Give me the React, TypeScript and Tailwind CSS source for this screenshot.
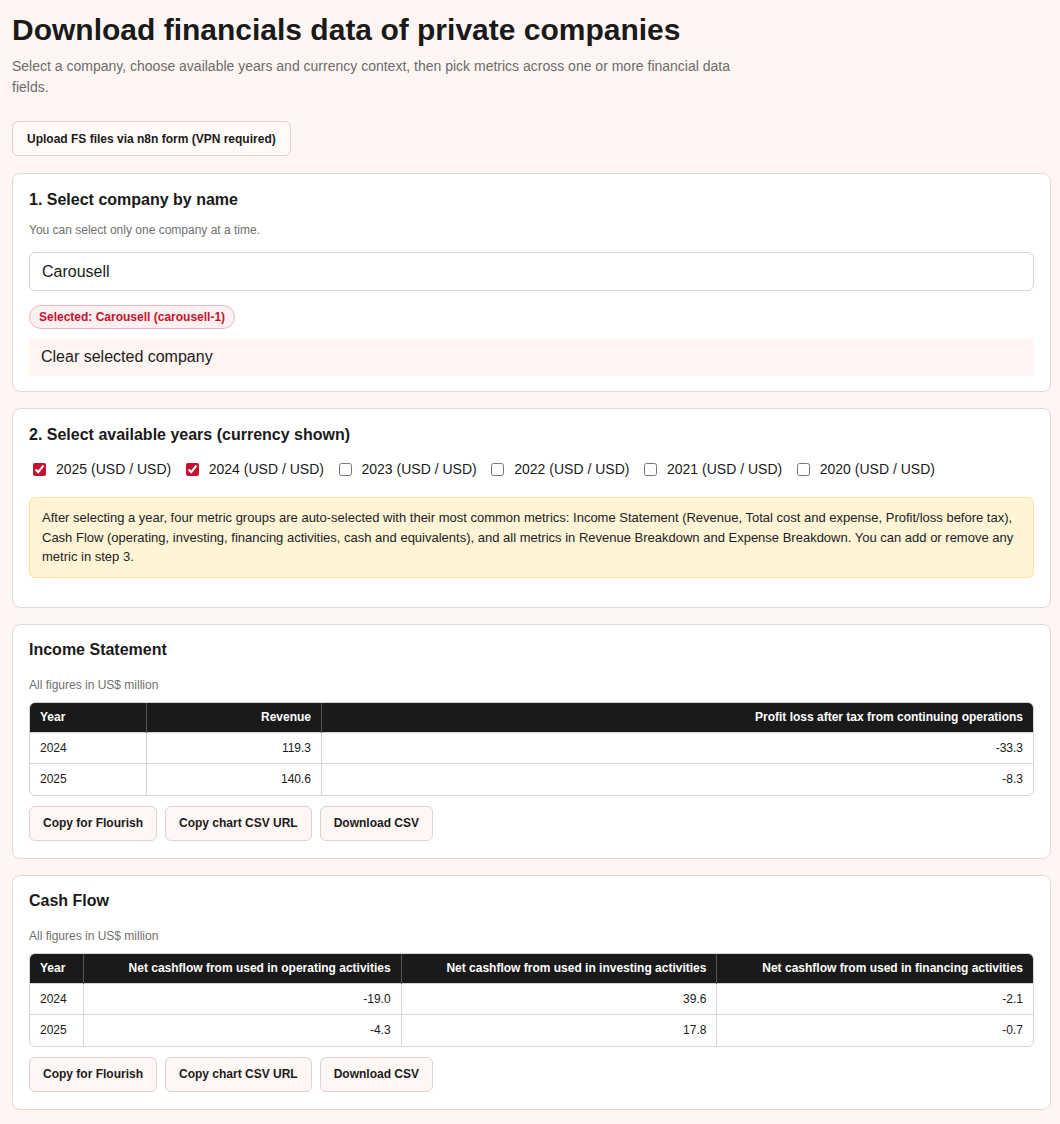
import React, { useState } from 'react';

type Table = {
  title: string;
  columns: string[];
  rows: (string | number)[][];
};

const years = [
  { year: 2025, checked: true },
  { year: 2024, checked: true },
  { year: 2023, checked: false },
  { year: 2022, checked: false },
  { year: 2021, checked: false },
  { year: 2020, checked: false },
];

const tables: Table[] = [
  {
    title: 'Income Statement',
    columns: ['Year', 'Revenue', 'Profit loss after tax from continuing operations'],
    rows: [
      ['2024', '119.3', '-33.3'],
      ['2025', '140.6', '-8.3'],
    ],
  },
  {
    title: 'Cash Flow',
    columns: [
      'Year',
      'Net cashflow from used in operating activities',
      'Net cashflow from used in investing activities',
      'Net cashflow from used in financing activities',
    ],
    rows: [
      ['2024', '-19.0', '39.6', '-2.1'],
      ['2025', '-4.3', '17.8', '-0.7'],
    ],
  },
];

const btn =
  'h-[35px] px-[13px] rounded-md border border-[#ddd3cf] bg-[#fff7f5] text-[12px] font-bold text-[#1a1a1a]';

const Card: React.FC<{ children: React.ReactNode; className?: string }> = ({ children, className }) => (
  <section className={`rounded-lg border border-[#e3dad6] bg-white px-4 ${className ?? ''}`}>{children}</section>
);

const DataTable: React.FC<{ table: Table }> = ({ table }) => (
  <Card className="pt-[15px] pb-[17px]">
    <h2 className="text-[16px] leading-[20px] font-bold text-[#1a1a1a]">{table.title}</h2>
    <p className="mt-[17px] text-[12px] leading-[16px] text-[#6f6f6f]">All figures in US$ million</p>
    <div className="mt-[9px] rounded-md border border-[#dcd3cf] overflow-hidden">
      <table className="w-full border-collapse text-[12px]">
        <thead>
          <tr className="bg-[#1a1a1a] text-white">
            {table.columns.map((c, i) => (
              <th
                key={c}
                className={`h-[30px] px-[10px] font-bold border-l border-[#5a5450] first:border-l-0 whitespace-nowrap ${
                  i === 0 ? 'text-left' : 'text-right'
                }`}
              >
                {c}
              </th>
            ))}
          </tr>
        </thead>
        <tbody>
          {table.rows.map((row, r) => (
            <tr key={r} className="border-t border-[#dcd3cf]">
              {row.map((v, i) => (
                <td
                  key={i}
                  className={`h-[31px] px-[10px] text-[#1a1a1a] border-l border-[#dcd3cf] first:border-l-0 ${
                    i === 0 ? 'text-left' : 'text-right'
                  }`}
                >
                  {v}
                </td>
              ))}
            </tr>
          ))}
        </tbody>
      </table>
    </div>
    <div className="mt-[10px] flex gap-2">
      <button className={btn}>Copy for Flourish</button>
      <button className={btn}>Copy chart CSV URL</button>
      <button className={btn}>Download CSV</button>
    </div>
  </Card>
);

export default function App() {
  const [checked, setChecked] = useState(years.map((y) => y.checked));

  return (
    <div
      className="min-h-screen bg-[#fff6f4] text-[#1a1a1a] pl-3 pt-3 pb-6"
      style={{ fontFamily: '"Liberation Sans", Arial, Helvetica, sans-serif' }}
    >
      <div className="w-[1039px]">
        <h1 className="text-[30px] leading-[36px] font-bold">Download financials data of private companies</h1>
        <p className="mt-2 max-w-[740px] text-[14px] leading-[21px] text-[#6b6b6b]">
          Select a company, choose available years and currency context, then pick metrics across one or more
          financial data fields.
        </p>

        <button className="mt-[23px] h-[35px] px-[14px] rounded-md border border-[#ddd3cf] bg-[#fff9f7] text-[12px] font-bold">
          Upload FS files via n8n form (VPN required)
        </button>

        <div className="mt-[17px] flex flex-col gap-4">
          <Card className="pt-4 pb-[15px]">
            <h2 className="text-[16px] leading-[20px] font-bold">1. Select company by name</h2>
            <p className="mt-3 text-[12px] leading-[16px] text-[#6f6f6f]">You can select only one company at a time.</p>
            <input
              defaultValue="Carousell"
              className="mt-[14px] block w-full h-[39px] rounded-md border border-[#dcd3cf] bg-white px-3 text-[16px] outline-none"
            />
            <div className="mt-[14px] flex">
              <span className="inline-flex h-6 items-center rounded-full border border-[#f0b4bd] bg-[#fdf0f1] px-[9px] text-[12px] font-bold text-[#c8102e]">
                Selected: Carousell (carousell-1)
              </span>
            </div>
            <button className="mt-[9px] block w-full h-[38px] bg-[#fff5f2] px-3 text-left text-[16px]">
              Clear selected company
            </button>
          </Card>

          <Card className="pt-4 pb-[29px]">
            <h2 className="text-[16px] leading-[20px] font-bold">2. Select available years (currency shown)</h2>
            <div className="mt-[14px] flex items-center gap-[14.6px] pl-[4px]">
              {years.map((y, i) => (
                <label key={y.year} className="flex items-center gap-[10px] text-[14px] leading-[20px]">
                  <input
                    type="checkbox"
                    checked={checked[i]}
                    onChange={() => setChecked(checked.map((c, j) => (j === i ? !c : c)))}
                    className="m-0 w-[13px] h-[13px] accent-[#c8102e]"
                  />
                  {y.year} (USD / USD)
                </label>
              ))}
            </div>
            <div className="mt-[18px] rounded-md border border-[#fbe39f] bg-[#fff4d6] px-3 py-[10px] text-[13px] leading-[19.5px] text-[#222]">
              After selecting a year, four metric groups are auto-selected with their most common metrics: Income
              Statement (Revenue, Total cost and expense, Profit/loss before tax), Cash Flow (operating, investing,
              financing activities, cash and equivalents), and all metrics in Revenue Breakdown and Expense Breakdown.
              You can add or remove any metric in step 3.
            </div>
          </Card>

          {tables.map((t) => (
            <DataTable key={t.title} table={t} />
          ))}
        </div>
      </div>
    </div>
  );
}
